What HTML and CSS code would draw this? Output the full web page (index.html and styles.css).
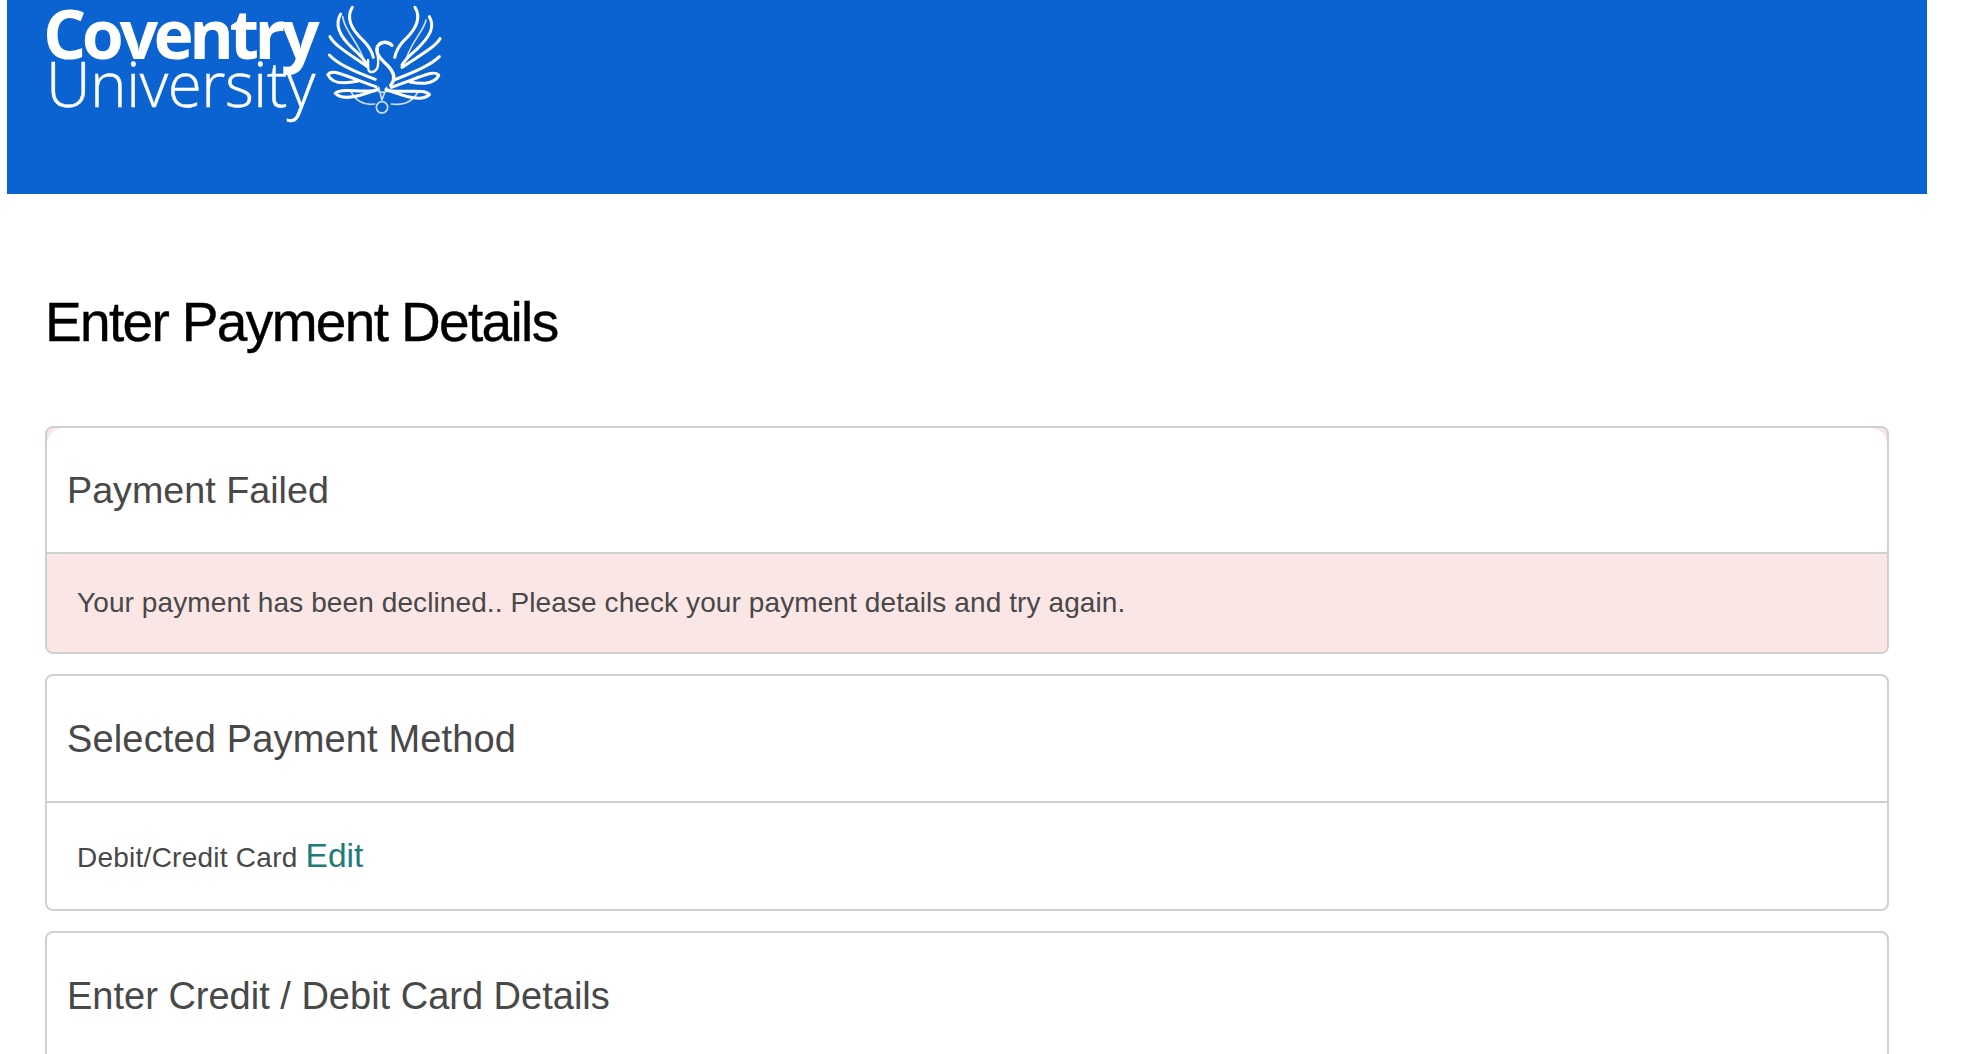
FILE: index.html
```
<!DOCTYPE html>
<html lang="en">
<head>
<meta charset="utf-8">
<title>Enter Payment Details</title>
<link rel="stylesheet" href="styles.css">
</head>
<body>
<div class="page">
  <header class="banner">
    <div class="logo">
      <div class="wordmark">
        <span class="word-bold">Coventry</span>
        <span class="word-light">University</span>
      </div>
      <svg class="phoenix" viewBox="0 0 390 360" fill="none" stroke="#fff" stroke-linecap="round" stroke-linejoin="round">
        <g stroke-width="9">
          <path d="M97 22C80 50 90 85 130 122C148 140 156 155 160 172"/>
          <path d="M62 42C42 75 58 108 98 145C118 162 132 178 142 195"/>
          <path d="M30 110C44 136 84 160 142 200"/>
          <path d="M28 165C52 192 100 214 166 238"/>
          <path d="M24 224C36 204 70 226 168 260"/>
          <path d="M24 224C34 250 70 252 112 244"/>
          <path d="M46 280C60 264 104 276 166 272"/>
          <path d="M46 280C66 302 112 292 172 268"/>
          <path d="M285 22C302 50 292 85 252 122C234 140 228 155 224 172"/>
          <path d="M328 50C346 80 330 110 290 148C270 165 256 178 246 195"/>
          <path d="M360 116C346 140 306 162 246 202"/>
          <path d="M358 170C334 194 288 214 222 240"/>
          <path d="M356 226C344 208 310 228 214 262"/>
          <path d="M356 226C346 250 310 254 270 246"/>
          <path d="M328 284C314 266 272 278 204 272"/>
          <path d="M328 284C308 304 264 294 198 268"/>
        </g>
        <g stroke-width="5" opacity=".8">
          <path d="M68 50C72 90 110 120 130 175"/>
          <path d="M318 60C312 92 276 122 258 178"/>
          <path d="M92 272C104 300 130 318 164 312"/>
          <path d="M296 272C282 300 256 318 214 312"/>
          <circle cx="186" cy="322" r="17"/>
          <path d="M170 268C176 280 198 280 206 268"/>
          <path d="M176 262L186 300L200 262"/>
        </g>
        <path d="M216 136C204 124 184 122 172 140C166 158 178 172 196 190C216 208 232 232 212 256" stroke-width="10"/>
        <path d="M172 146C172 172 184 212 156 216C140 218 146 196 144 180" stroke-width="7"/>
      </svg>
    </div>
  </header>
  <main class="content">
    <h1 class="page-title">Enter Payment Details</h1>
    <section class="card card-failed">
      <h2 class="card-title">Payment Failed</h2>
      <div class="card-body body-error"><p class="message">Your payment has been declined.. Please check your payment details and try again.</p></div>
    </section>
    <section class="card card-method">
      <h2 class="card-title">Selected Payment Method</h2>
      <div class="card-body body-method"><p class="message message-method">Debit/Credit Card <a class="edit-link" href="#">Edit</a></p></div>
    </section>
    <section class="card card-last">
      <h2 class="card-title">Enter Credit / Debit Card Details</h2>
    </section>
  </main>
</div>
</body>
</html>
```
FILE: styles.css
```
* { box-sizing: border-box; }
html, body { margin: 0; height: 1054px; overflow: hidden; background: #fff; }
body { font-family: "Liberation Sans", Arial, sans-serif; color: #484848; }
.page { width: 1920px; margin-left: 7px; }
.banner { height: 194px; background: #0a63d1; padding-left: 36px; }
.logo { display: flex; align-items: flex-start; }
.wordmark { display: flex; flex-direction: column; width: 277px; padding-top: 4px; color: #fff; font-family: "Open Sans", sans-serif; }
.word-bold { font-size: 68px; font-weight: 700; line-height: 58px; letter-spacing: -4.5px; white-space: nowrap; }
.word-light { font-size: 62px; font-weight: 300; line-height: 43px; letter-spacing: -0.5px; margin-left: 3px; white-space: nowrap; -webkit-text-stroke: 0.4px #fff; }
.phoenix { width: 130px; height: 120px; flex: none; filter: blur(0.6px); }
.content { padding: 0 38px; }
.page-title { margin: 0; padding-top: 96px; height: 232px; font-size: 55px; line-height: 64px; font-weight: 400; color: #000; letter-spacing: -1.65px; -webkit-text-stroke: 0.4px #000; }
.card { border: 2px solid #d0d0d0; border-radius: 8px; margin-bottom: 20px; overflow: hidden; background: #fff; }
.card-failed { background: #fbe6e6; }
.card-failed .card-title { background: #fff; border-radius: 16px 16px 0 0; font-size: 37.7px; }
.card-title { margin: 0; height: 126px; padding: 0 20px; display: flex; align-items: center; font-size: 38px; font-weight: 400; color: #484848; border-bottom: 2px solid #d0d0d0; }
.card-method .card-title { height: 127px; padding-top: 2px; letter-spacing: 0.15px; }
.card-body { padding-left: 30px; display: flex; align-items: center; }
.body-error { height: 98px; background: #fbe6e6; }
.body-method { height: 106px; }
.message { margin: 0; font-size: 28px; letter-spacing: 0.1px; color: #484848; }
.message-method { letter-spacing: 0.25px; }
.edit-link { font-size: 33.5px; color: #217a7c; text-decoration: none; margin-left: 0; letter-spacing: 0; }
.card-last { height: 200px; }
.card-last .card-title { border-bottom: 0; }
```
